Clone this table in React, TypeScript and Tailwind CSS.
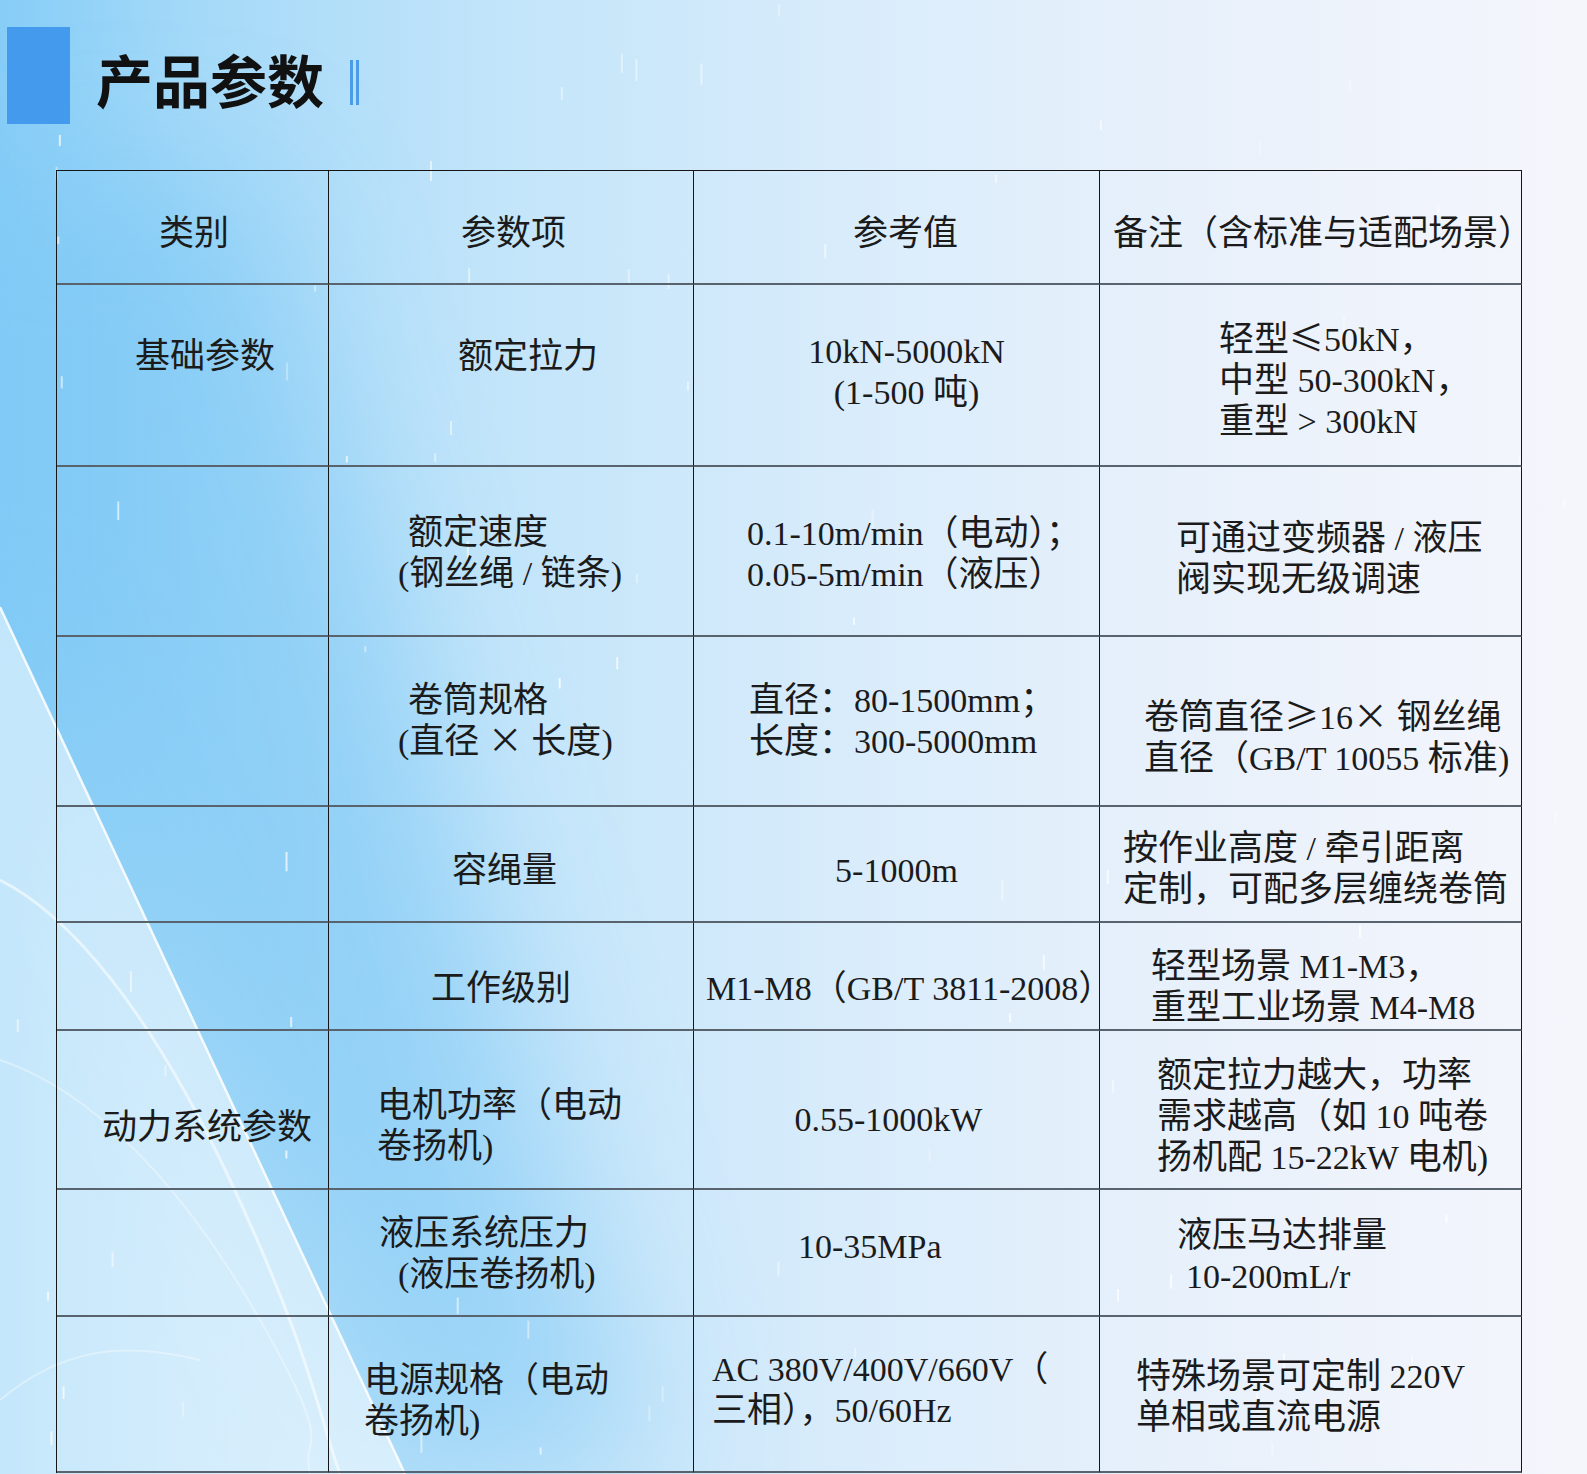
import React from "react";

type Line = string | { t: string; c: string };

const LATIN = /([\x20-\x7e]+)/;

function Txt({ s }: { s: string }) {
  const parts = s.split(LATIN);
  return (
    <>
      {parts.map((p, i) =>
        i % 2 === 1 ? (
          <span
            key={i}
            className="font-['Liberation_Serif',serif] text-[34px] leading-[32px]"
          >
            {p}
          </span>
        ) : (
          <React.Fragment key={i}>{p}</React.Fragment>
        )
      )}
    </>
  );
}

function Cell({ c = "", lines = [] }: { c?: string; lines?: Line[] }) {
  return (
    <div
      className={`whitespace-nowrap border-r border-b-2 border-r-[#161616] border-b-[#59636d] text-[35px] leading-[41px] ${c}`}
    >
      {lines.map((l, i) =>
        typeof l === "string" ? (
          <div key={i}>
            <Txt s={l} />
          </div>
        ) : (
          <div key={i} className={l.c}>
            <Txt s={l.t} />
          </div>
        )
      )}
    </div>
  );
}

function Backdrop() {
  const drops: [number, number, number, number][] = [];
  let seed = 17;
  const rnd = () => {
    seed = (seed * 9301 + 49297) % 233280;
    return seed / 233280;
  };
  for (let i = 0; i < 80; i++) {
    drops.push([rnd() * 1587, rnd() * 1474, 6 + rnd() * 16, 0.3 + rnd() * 0.45]);
  }

  return (
    <svg
      className="pointer-events-none absolute inset-0"
      width="1587"
      height="1474"
      viewBox="0 0 1587 1474"
    >
      <defs>
        <filter id="soft" x="-50%" y="-50%" width="200%" height="200%">
          <feGaussianBlur stdDeviation="70" />
        </filter>
      </defs>
      <polygon
        points="0,180 0,607 405,1474 650,1474 250,180"
        fill="#6cc2f5"
        fillOpacity="0.45"
        filter="url(#soft)"
      />
      <polygon points="0,607 405,1474 0,1474" fill="#ffffff" fillOpacity="0.52" />
      <path d="M0 607 L405 1474" stroke="#ffffff" strokeOpacity="0.85" strokeWidth="2.5" />
      <path
        d="M0 880 C70 915 150 1010 230 1180 S 320 1420 340 1474"
        stroke="#ffffff"
        strokeOpacity="0.55"
        strokeWidth="3"
        fill="none"
      />
      <path
        d="M0 1060 C90 1090 180 1180 260 1320 S 300 1430 310 1474"
        stroke="#ffffff"
        strokeOpacity="0.35"
        strokeWidth="2"
        fill="none"
      />
      <path
        d="M0 1400 C60 1350 120 1340 200 1360"
        stroke="#ffffff"
        strokeOpacity="0.35"
        strokeWidth="2"
        fill="none"
      />
      {drops.map(([x, y, h, o], i) => (
        <rect key={i} x={x} y={y} width="2" height={h} fill="#ffffff" fillOpacity={o} />
      ))}
    </svg>
  );
}

export default function App() {
  return (
    <div className="relative h-[1474px] w-[1587px] overflow-hidden bg-[linear-gradient(90deg,#86cdf7_0%,#a4d9f8_12%,#c3e5fa_32%,#dcedfb_57%,#ecf2fb_82%,#f5f6fc_100%)] font-['Noto_Sans_CJK_SC',sans-serif] text-[#1b1b1b]">
      <Backdrop />
      <div className="relative">
        <header className="flex pt-[27px]">
          <div className="ml-[7px] h-[97px] w-[63px] bg-[#449bee]" />
          <h1 className="ml-[26px] mt-[23px] text-[57px] font-semibold leading-[57px] text-[#111]">
            产品参数
          </h1>
          <div className="ml-[26px] mt-[33px] flex h-[45px] gap-[3px]">
            <span className="w-[3px] bg-[#4a9be8]" />
            <span className="w-[3px] bg-[#4a9be8]" />
          </div>
        </header>

        <div className="ml-[56px] mt-[46px] grid w-[1466px] grid-cols-[272px_365px_406px_422px] grid-rows-[114px_182px_170px_170px_116px_108px_159px_127px_156px] border-l border-t border-[#161616]">
          {/* header */}
          <Cell c="pt-[38px] pl-[102px]" lines={["类别"]} />
          <Cell c="pt-[38px] pl-[132px]" lines={["参数项"]} />
          <Cell c="pt-[38px] pl-[159px]" lines={["参考值"]} />
          <Cell c="pt-[38px] pl-[13px]" lines={["备注（含标准与适配场景）"]} />

          {/* 额定拉力 */}
          <Cell c="pt-[47px] pl-[78px]" lines={["基础参数"]} />
          <Cell c="pt-[47px] pl-[129px]" lines={["额定拉力"]} />
          <Cell c="pt-[42px] pl-[20px] text-center" lines={["10kN-5000kN", "(1-500 吨)"]} />
          <Cell
            c="pt-[30px] pl-[119px]"
            lines={["轻型≤50kN，", "中型 50-300kN，", "重型 > 300kN"]}
          />

          {/* 额定速度 */}
          <Cell />
          <Cell
            c="pt-[41px]"
            lines={[
              { t: "额定速度", c: "pl-[79px]" },
              { t: "(钢丝绳 / 链条)", c: "pl-[69px]" },
            ]}
          />
          <Cell
            c="pt-[42px] pl-[53px]"
            lines={["0.1-10m/min（电动）；", "0.05-5m/min（液压）"]}
          />
          <Cell c="pt-[47px] pl-[76px]" lines={["可通过变频器 / 液压", "阀实现无级调速"]} />

          {/* 卷筒规格 */}
          <Cell />
          <Cell
            c="pt-[39px]"
            lines={[
              { t: "卷筒规格", c: "pl-[79px]" },
              { t: "(直径 × 长度)", c: "pl-[69px]" },
            ]}
          />
          <Cell c="pt-[39px] pl-[55px]" lines={["直径：80-1500mm；", "长度：300-5000mm"]} />
          <Cell
            c="pt-[56px] pl-[44px]"
            lines={["卷筒直径≥16× 钢丝绳", "直径（GB/T 10055 标准)"]}
          />

          {/* 容绳量 */}
          <Cell />
          <Cell c="pt-[39px] pl-[123px]" lines={["容绳量"]} />
          <Cell c="pt-[39px] text-center" lines={["5-1000m"]} />
          <Cell
            c="pt-[17px] pl-[23px]"
            lines={["按作业高度 / 牵引距离", "定制，可配多层缠绕卷筒"]}
          />

          {/* 工作级别 */}
          <Cell />
          <Cell c="pt-[41px] pl-[102px]" lines={["工作级别"]} />
          <Cell c="pt-[41px] pl-[12px]" lines={["M1-M8（GB/T 3811-2008）"]} />
          <Cell c="pt-[19px] pl-[51px]" lines={["轻型场景 M1-M3，", "重型工业场景 M4-M8"]} />

          {/* 电机功率 */}
          <Cell c="pt-[72px] pl-[45px]" lines={["动力系统参数"]} />
          <Cell c="pt-[50px] pl-[48px]" lines={["电机功率（电动", "卷扬机)"]} />
          <Cell c="pt-[64px] pr-[16px] text-center" lines={["0.55-1000kW"]} />
          <Cell
            c="pt-[20px] pl-[57px]"
            lines={["额定拉力越大，功率", "需求越高（如 10 吨卷", "扬机配 15-22kW 电机)"]}
          />

          {/* 液压系统压力 */}
          <Cell />
          <Cell
            c="pt-[19px]"
            lines={[
              { t: "液压系统压力", c: "pl-[50px]" },
              { t: "(液压卷扬机)", c: "pl-[69px]" },
            ]}
          />
          <Cell c="pt-[32px] pl-[104px]" lines={["10-35MPa"]} />
          <Cell
            c="pt-[21px]"
            lines={[
              { t: "液压马达排量", c: "pl-[77px]" },
              { t: "10-200mL/r", c: "pl-[86px]" },
            ]}
          />

          {/* 电源规格 */}
          <Cell />
          <Cell c="pt-[39px] pl-[35px]" lines={["电源规格（电动", "卷扬机)"]} />
          <Cell c="pt-[28px] pl-[18px]" lines={["AC 380V/400V/660V（", "三相），50/60Hz"]} />
          <Cell c="pt-[35px] pl-[36px]" lines={["特殊场景可定制 220V", "单相或直流电源"]} />
        </div>
      </div>
    </div>
  );
}
